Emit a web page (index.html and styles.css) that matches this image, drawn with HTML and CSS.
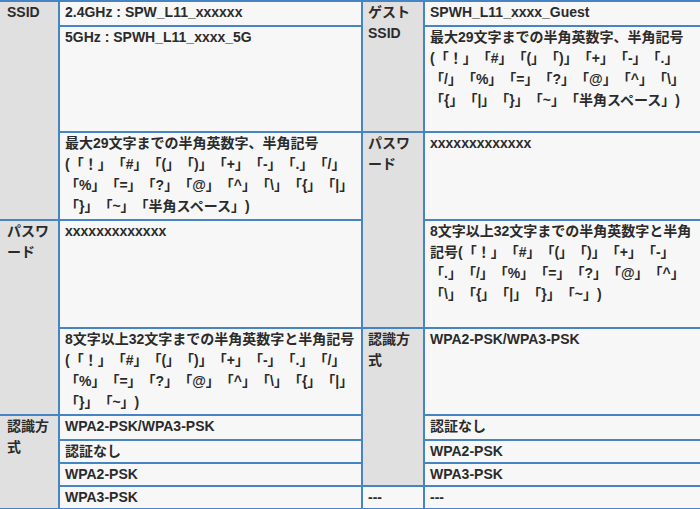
FILE: index.html
```html
<!DOCTYPE html>
<html lang="ja">
<head>
<meta charset="utf-8">
<title>SSID仕様</title>
<link rel="stylesheet" href="styles.css">
</head>
<body>
<table class="spec">
  <colgroup>
    <col class="col-head-l">
    <col class="col-data-l">
    <col class="col-head-r">
    <col class="col-data-r">
  </colgroup>
  <tr class="row-1">
    <th rowspan="3" class="first">SSID</th>
    <td>2.4GHz : SPW_L11_xxxxxx</td>
    <th rowspan="2">ゲスト<br>SSID</th>
    <td>SPWH_L11_xxxx_Guest</td>
  </tr>
  <tr class="row-2">
    <td>5GHz : SPWH_L11_xxxx_5G</td>
    <td class="desc">最大29文字までの半角英数字、半角記号<br>(「！」「#」「(」「)」「+」「-」「.」<br>「/」「%」「=」「?」「@」「^」「\」<br>「{」「|」「}」「~」「半角スペース」)</td>
  </tr>
  <tr class="row-3">
    <td class="desc">最大29文字までの半角英数字、半角記号<br>(「！」「#」「(」「)」「+」「-」「.」「/」<br>「%」「=」「?」「@」「^」「\」「{」「|」<br>「}」「~」「半角スペース」)</td>
    <th rowspan="2">パスワード</th>
    <td>xxxxxxxxxxxxx</td>
  </tr>
  <tr class="row-4">
    <th rowspan="2" class="first">パスワード</th>
    <td>xxxxxxxxxxxxx</td>
    <td class="desc">8文字以上32文字までの半角英数字と半角<br>記号(「！」「#」「(」「)」「+」「-」<br>「.」「/」「%」「=」「?」「@」「^」<br>「\」「{」「|」「}」「~」)</td>
  </tr>
  <tr class="row-5">
    <td class="desc">8文字以上32文字までの半角英数字と半角記号<br>(「！」「#」「(」「)」「+」「-」「.」「/」<br>「%」「=」「?」「@」「^」「\」「{」「|」<br>「}」「~」)</td>
    <th rowspan="4">認識方式</th>
    <td>WPA2-PSK/WPA3-PSK</td>
  </tr>
  <tr class="row-6">
    <th rowspan="4" class="first">認識方式</th>
    <td>WPA2-PSK/WPA3-PSK</td>
    <td>認証なし</td>
  </tr>
  <tr class="row-s">
    <td>認証なし</td>
    <td>WPA2-PSK</td>
  </tr>
  <tr class="row-s">
    <td>WPA2-PSK</td>
    <td>WPA3-PSK</td>
  </tr>
  <tr class="row-s">
    <td>WPA3-PSK</td>
    <td>---</td>
    <td>---</td>
  </tr>
</table>
</body>
</html>
```

FILE: styles.css
```css
html, body {
  margin: 0;
  padding: 0;
  background: #f7f7f7;
}

.spec {
  border-collapse: collapse;
  table-layout: fixed;
  width: 701px;
  font-family: "Liberation Sans", "Noto Sans CJK JP", sans-serif;
  font-size: 14px;
  font-weight: bold;
  line-height: 21px;
  color: #2b2b2b;
  text-spacing-trim: space-all;
}

.col-head-l { width: 59px; }
.col-data-l { width: 303px; }
.col-head-r { width: 62px; }
.col-data-r { width: 277px; }

.spec th,
.spec td {
  border: 2px solid #4585c6;
  padding: 0 5px;
  text-align: left;
  vertical-align: top;
  font-weight: bold;
}

.spec th {
  background: #e0e0e0;
}

.spec th.first {
  border-left: 0;
  padding-left: 7px;
}

.spec td {
  background: #f7f7f7;
}

.spec .desc {
  white-space: nowrap;
}

.row-1 { height: 25px; }
.row-2 { height: 106px; }
.row-3 { height: 88px; }
.row-4 { height: 108px; }
.row-5 { height: 87px; }
.row-6 { height: 25px; }
.row-s { height: 23px; }
```
